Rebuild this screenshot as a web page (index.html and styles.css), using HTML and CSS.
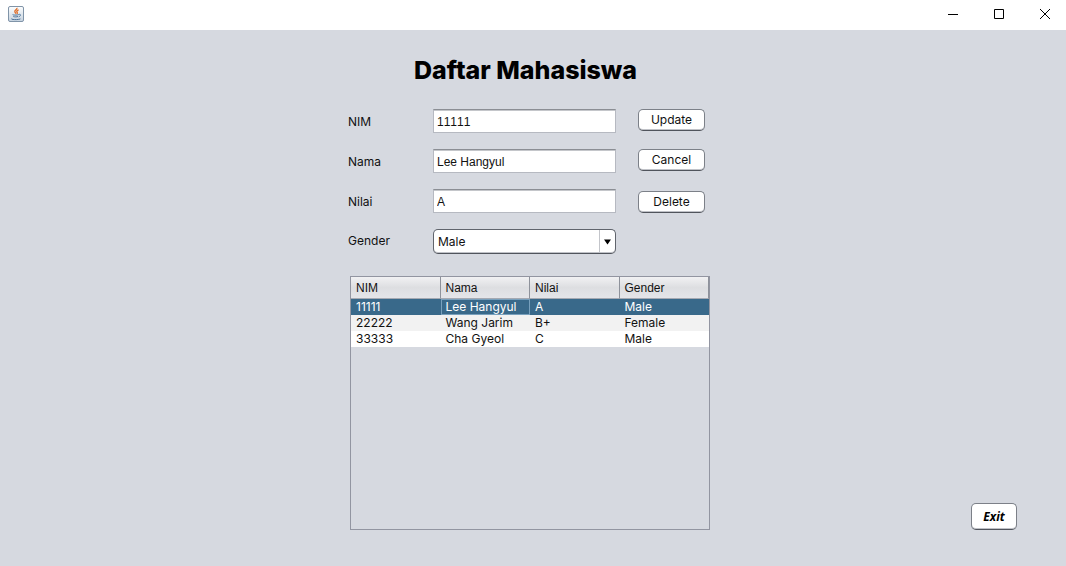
FILE: index.html
```
<!DOCTYPE html>
<html lang="id">
<head>
<meta charset="utf-8">
<title>Daftar Mahasiswa</title>
<link rel="stylesheet" href="styles.css">
</head>
<body>
<header class="titlebar">
  <svg class="app-icon" viewBox="0 0 16 16" role="img" aria-label="Java">
    <defs><linearGradient id="tile" x1="0" y1="0" x2="0" y2="1"><stop offset="0" stop-color="#fdfefe"/><stop offset="1" stop-color="#c5d2df"/></linearGradient></defs>
    <rect x="0.5" y="0.5" width="15" height="15" rx="1.5" fill="url(#tile)" stroke="#8094a8"/>
    <path d="M8.800 1.800c1 1.700-2.800 2.300-1.900 4.200.3.600.7.900 1 1.600M10.600 3.900c-1.900.7-2.200 1.600-1.400 2.500.3.400.2.900-.3 1.400" fill="none" stroke="#e0702c" stroke-width="1.400"/>
    <path d="M4.800 8.500c-1 .7 4.400.8 6 .1M5.300 10.500c1.400.5 3.400.5 4.700 0M11.200 8.300c2-.3 1.500 1.900-.5 2.500M3.600 12.700c-1.200.9 6.200 1.400 8.800.2" fill="none" stroke="#4d7399"/>
  </svg>
  <div class="window-controls">
    <button class="window-button" aria-label="Minimize"><svg viewBox="0 0 12 12"><path d="M1 6.500h10"/></svg></button>
    <button class="window-button" aria-label="Maximize"><svg viewBox="0 0 12 12"><path d="M1.500 1.500h9v9h-9z"/></svg></button>
    <button class="window-button" aria-label="Close"><svg viewBox="0 0 12 12"><path d="M1 1l10 10M11 1L1 11"/></svg></button>
  </div>
</header>
<main class="stage">
  <section class="panel">
    <h1 class="title">Daftar Mahasiswa</h1>
    <form class="form">
      <label class="label" for="nim">NIM</label>
      <input class="field" id="nim" type="text" value="11111">
      <button class="button" type="button">Update</button>
      <label class="label" for="nama">Nama</label>
      <input class="field" id="nama" type="text" value="Lee Hangyul">
      <button class="button" type="button">Cancel</button>
      <label class="label" for="nilai">Nilai</label>
      <input class="field" id="nilai" type="text" value="A">
      <button class="button button-low" type="button">Delete</button>
      <label class="label label-gender" for="gender">Gender</label>
      <div class="combo">
        <select class="combo-select" id="gender"><option>Male</option><option>Female</option></select>
        <svg class="combo-arrow" viewBox="0 0 7 6" aria-hidden="true"><path d="M0 0.500h7L3.500 5.500z"/></svg>
      </div>
    </form>
    <div class="table-pane">
      <table class="table">
        <thead><tr><th>NIM</th><th>Nama</th><th>Nilai</th><th>Gender</th></tr></thead>
        <tbody>
          <tr class="selected"><td>11111</td><td class="focused">Lee Hangyul</td><td>A</td><td>Male</td></tr>
          <tr><td>22222</td><td>Wang Jarim</td><td>B+</td><td>Female</td></tr>
          <tr><td>33333</td><td>Cha Gyeol</td><td>C</td><td>Male</td></tr>
        </tbody>
      </table>
    </div>
  </section>
  <button class="button exit" type="button">Exit</button>
</main>
</body>
</html>
```
FILE: styles.css
```
* { box-sizing: border-box; }

body {
  display: flex;
  flex-direction: column;
  min-height: 100vh;
  margin: 0;
  background: #d6d9e0;
  color: #111;
  font-family: Inter, sans-serif;
  font-size: 12px;
  line-height: 16px;
}

.titlebar {
  display: flex;
  align-items: center;
  justify-content: space-between;
  height: 30px;
  padding-left: 8px;
  padding-bottom: 2px;
  background: #fff;
}

.app-icon { width: 16px; height: 16px; }

.window-controls { display: flex; }

.window-button {
  display: grid;
  place-items: center;
  width: 46px;
  height: 28px;
  padding: 0 0 0 4px;
  border: 0;
  background: none;
}

.window-button svg {
  width: 12px;
  height: 12px;
  fill: none;
  stroke: #000;
}

.stage {
  flex: 1;
  display: grid;
  grid-template-columns: minmax(0, 1fr) 362px minmax(0, 1fr);
  padding: 24px 49px 36px 41px;
}

.panel {
  grid-column: 2;
  display: flex;
  flex-direction: column;
}

.title {
  margin: 0 7px 23px 0;
  color: #000;
  font-size: 25px;
  font-weight: 800;
  line-height: 32px;
  text-align: center;
  white-space: nowrap;
}

.form {
  display: grid;
  grid-template-columns: 63px 183px 67px;
  grid-auto-rows: 24px;
  gap: 16px 22px;
}

.label { align-self: center; padding-top: 2px; }

.label-gender { padding-top: 0; }

.field {
  width: 100%;
  height: 24px;
  padding: 1px 3px 0;
  border: 1px solid #b6b9c1;
  border-top-color: #8b8e94;
  background: #fff;
  box-shadow: inset 0 1px #c4c6ca;
  color: #111;
  font-family: "Liberation Sans", Arial, sans-serif;
  font-size: 12px;
  font-kerning: none;
}

.button {
  height: 22px;
  padding: 0;
  border: 1px solid #7c8088;
  border-bottom-color: #50545c;
  border-radius: 5px;
  background: #fff;
  box-shadow: inset 0 -1px #c0c2c8;
  color: #111;
  font-family: inherit;
  font-size: 12px;
  line-height: 16px;
}

.button-low { align-self: end; }

.combo {
  display: grid;
  grid-template-columns: 1fr 16px;
  height: 25px;
}

.combo-select {
  grid-area: 1 / 1 / 2 / 3;
  appearance: none;
  padding: 0 20px 1px 4px;
  border: 1px solid #60646c;
  border-bottom-color: #50545c;
  border-radius: 5px;
  background: linear-gradient(#c3c5ca, #c3c5ca) right 15px top / 1px 100% no-repeat #fff;
  box-shadow: inset 0 -1px #c0c2c8;
  color: #111;
  font-family: inherit;
  font-size: 12px;
}

.combo-arrow {
  grid-area: 1 / 2;
  place-self: center start;
  width: 7px;
  height: 6px;
  margin-left: 4px;
  pointer-events: none;
}

.table-pane {
  flex: 1;
  margin: 23px 0 0 2px;
  border: 1px solid #9295a1;
}

.table {
  width: 100%;
  table-layout: fixed;
  border-collapse: separate;
  border-spacing: 0;
}

.table th {
  height: 22px;
  padding: 0 5px;
  border-right: 1px solid #8e929b;
  border-bottom: 1px solid #a5a9b2;
  background: linear-gradient(#f1f1f3, #dddee1 50%, #e4e5e9);
  font-family: "Liberation Sans", Arial, sans-serif;
  font-weight: 400;
  text-align: left;
}

.table td {
  height: 16px;
  padding: 0 5px;
  background: #fff;
  line-height: 16px;
  white-space: nowrap;
}

.table tr:nth-child(2) td { background: #f2f2f2; }

.table .selected td { background: #39698a; color: #fff; }

.table .focused { box-shadow: inset 0 0 0 1px #78a0bd; }

.exit {
  grid-column: 3;
  place-self: end;
  width: 46px;
  height: 27px;
  color: #000;
  font-family: "Open Sans", sans-serif;
  font-style: italic;
  font-weight: 700;
}
```
